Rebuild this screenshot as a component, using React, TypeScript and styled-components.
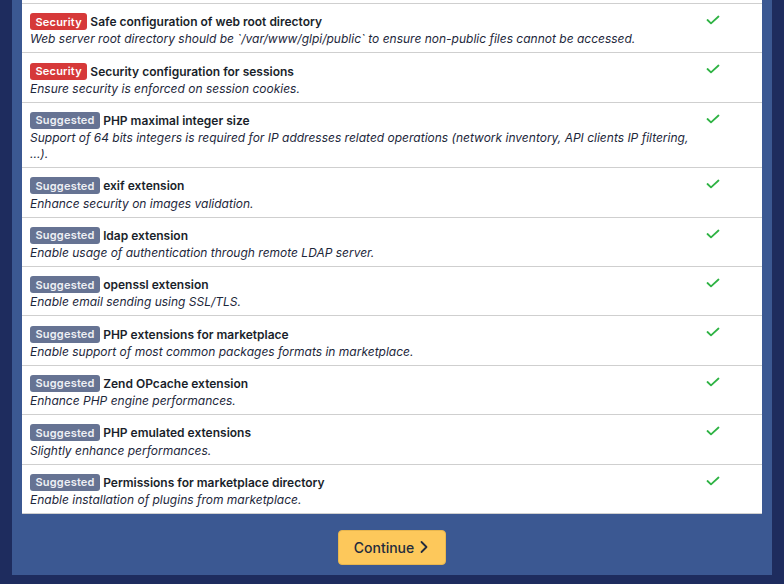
import React from "react";
import styled, { createGlobalStyle } from "styled-components";

const GlobalStyle = createGlobalStyle`
  html, body {
    margin: 0;
    padding: 0;
    background: #1e2c5e;
    font-family: Inter, "Noto Sans", sans-serif;
    overflow: hidden;
  }
`;

const Page = styled.div`
  width: 784px;
  height: 584px;
  padding: 0 12px 9px;
  box-sizing: border-box;
  background: #1e2c5e;
  display: flex;
`;

const Panel = styled.div`
  flex: 1;
  background: #3b5892;
  padding: 0 10px 10px;
  display: flex;
  flex-direction: column;
  align-items: stretch;
`;

const TableWrap = styled.div`
  background: #ffffff;
  padding-top: 3px;
`;

const Table = styled.table`
  width: 100%;
  border-collapse: collapse;
  color: #1d273b;
`;

const Row = styled.tr`
  border-top: 1px solid #cfcfcf;
  &:last-child {
    border-bottom: 1px solid #cfcfcf;
  }
`;

const TextCell = styled.td`
  padding: 8px 8px 5px;
  vertical-align: top;
`;

const CheckCell = styled.td`
  width: 48px;
  padding: 8px 8px 5px;
  vertical-align: top;
`;

const TitleLine = styled.div`
  display: flex;
  align-items: center;
  gap: 3px;
  height: 19.4px;
`;

const Badge = styled.span<{ $kind: "security" | "suggested" }>`
  display: inline-flex;
  align-items: center;
  height: 17px;
  padding: 0 5.5px;
  border-radius: 3px;
  font-size: 11px;
  font-weight: 600;
  letter-spacing: 0.2px;
  color: ${({ $kind }) => ($kind === "security" ? "#ffffff" : "#eef0f5")};
  background: ${({ $kind }) => ($kind === "security" ? "#d63939" : "#667393")};
`;

const Title = styled.span`
  font-size: 12px;
  font-weight: 600;
  color: #1a1f2b;
`;

const Desc = styled.div`
  font-size: 12px;
  font-style: italic;
  line-height: 16px;
  color: #1d273b;
`;

const Check = styled.svg`
  display: block;
  margin-top: 3px;
`;

const Footer = styled.div`
  display: flex;
  justify-content: center;
  padding-top: 16px;
`;

const ContinueButton = styled.button`
  display: inline-flex;
  align-items: center;
  gap: 4px;
  height: 35px;
  padding: 0 15px;
  border: 1px solid #e8b64e;
  border-radius: 4px;
  background: #fdc85b;
  color: #232b3d;
  font-family: Inter, "Noto Sans", sans-serif;
  font-size: 14px;
  font-weight: 500;
  cursor: pointer;
`;

type Check = {
  kind: "security" | "suggested";
  title: string;
  desc: string;
};

const checks: Check[] = [
  {
    kind: "security",
    title: "Safe configuration of web root directory",
    desc: "Web server root directory should be `/var/www/glpi/public` to ensure non-public files cannot be accessed.",
  },
  {
    kind: "security",
    title: "Security configuration for sessions",
    desc: "Ensure security is enforced on session cookies.",
  },
  {
    kind: "suggested",
    title: "PHP maximal integer size",
    desc: "Support of 64 bits integers is required for IP addresses related operations (network inventory, API clients IP filtering, ...).",
  },
  { kind: "suggested", title: "exif extension", desc: "Enhance security on images validation." },
  { kind: "suggested", title: "ldap extension", desc: "Enable usage of authentication through remote LDAP server." },
  { kind: "suggested", title: "openssl extension", desc: "Enable email sending using SSL/TLS." },
  {
    kind: "suggested",
    title: "PHP extensions for marketplace",
    desc: "Enable support of most common packages formats in marketplace.",
  },
  { kind: "suggested", title: "Zend OPcache extension", desc: "Enhance PHP engine performances." },
  { kind: "suggested", title: "PHP emulated extensions", desc: "Slightly enhance performances." },
  {
    kind: "suggested",
    title: "Permissions for marketplace directory",
    desc: "Enable installation of plugins from marketplace.",
  },
];

const CheckIcon = () => (
  <Check width="14" height="10" viewBox="0 0 14 10">
    <path d="M1.5 5 L5 8.3 L12.5 1.5" fill="none" stroke="#2fb344" strokeWidth="1.8" strokeLinecap="round" strokeLinejoin="round" />
  </Check>
);

export default function App() {
  return (
    <>
      <GlobalStyle />
      <Page>
        <Panel>
          <TableWrap>
            <Table>
              <tbody>
                {checks.map((c) => (
                  <Row key={c.title}>
                    <TextCell>
                      <TitleLine>
                        <Badge $kind={c.kind}>{c.kind === "security" ? "Security" : "Suggested"}</Badge>
                        <Title>{c.title}</Title>
                      </TitleLine>
                      <Desc>{c.desc}</Desc>
                    </TextCell>
                    <CheckCell>
                      <CheckIcon />
                    </CheckCell>
                  </Row>
                ))}
              </tbody>
            </Table>
          </TableWrap>
          <Footer>
            <ContinueButton type="button">
              Continue
              <svg width="12" height="14" viewBox="0 0 12 14">
                <path d="M3.5 2 L8.5 7 L3.5 12" fill="none" stroke="#232b3d" strokeWidth="1.8" strokeLinecap="round" strokeLinejoin="round" />
              </svg>
            </ContinueButton>
          </Footer>
        </Panel>
      </Page>
    </>
  );
}
